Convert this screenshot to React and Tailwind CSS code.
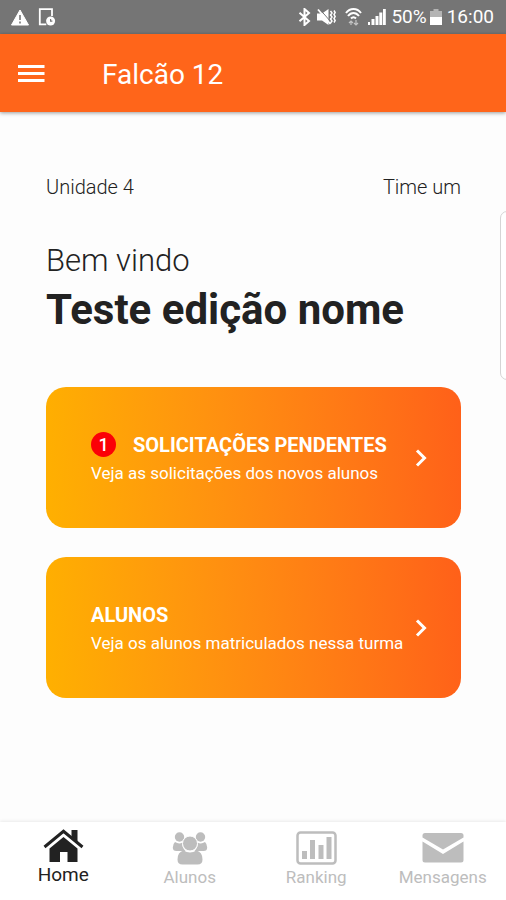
function StatusBar() {
  return (
    <div className="flex h-[34px] shrink-0 items-center justify-between bg-[#757575] pr-3 pl-[11px] text-white">
      <div className="flex items-center gap-[9px]">
        <svg width="18" height="17" viewBox="0 0 18 17" aria-hidden="true">
          <path d="M9 1 17.5 16H.5Z" fill="#fff" strokeLinejoin="round" stroke="#fff" strokeWidth="1" />
          <path d="M9 6v5M9 12.5v2" stroke="#757575" strokeWidth="1.6" />
        </svg>
        <svg width="18" height="18" viewBox="0 0 18 18" fill="none" aria-hidden="true">
          <path d="M14 8V1.2H1.8v15.2h6.5" stroke="#fff" strokeWidth="1.8" />
          <circle cx="12.6" cy="13" r="4.5" fill="#fff" />
          <path d="M12.6 11v2.2h1.8" stroke="#757575" strokeWidth="1.2" />
        </svg>
      </div>
      <div className="flex items-center">
        <svg width="13" height="18" viewBox="0 0 13 18" fill="none" aria-hidden="true">
          <path d="M1.5 4.8 11 13l-4.5 4V1L11 5 1.5 13.2" stroke="#fff" strokeWidth="2" />
        </svg>
        <svg className="ml-[6px]" width="19" height="18" viewBox="0 0 19 18" fill="none" aria-hidden="true">
          <path d="M0 5.5h5L11.5 1v16L5 12.5H0Z" fill="#fff" />
          <path d="M3 1.500 14 14" stroke="#757575" strokeWidth="1" />
          <path d="M1 1.500 13.500 16" stroke="#fff" strokeWidth="1.800" />
          <path d="m13.500 3 1.500 2-1.500 2L15 9l-1.500 2 1.500 2-1.500 2M17 2.500l1.200 2-1.200 2 1.200 2-1.200 2 1.200 2-1.200 2" stroke="#fff" strokeWidth="1.500" />
        </svg>
        <svg className="ml-[9px]" width="17" height="18" viewBox="0 0 17 18" fill="none" aria-hidden="true">
          <path d="M1 5c4-5.200 11-5.200 15 0M3 8c3.200-4 7.800-4 11 0M6 10.500c1.600-1.800 3.400-1.800 5 0" stroke="#fff" strokeWidth="2" />
          <path d="M6 17v-4m-2 2 2-2 2 2M11 12v5m-2-2 2 2 2-2" stroke="#c4c4c4" strokeWidth="1.2" />
        </svg>
        <svg className="ml-[5px]" width="19" height="18" viewBox="0 0 19 18" fill="#fff" aria-hidden="true">
          <path d="M1 14h2v3H1zM4.500 11h3v6h-3zM8.500 8h3v9h-3zM12.300 4.500h3V17h-3zM16 1h2.800v16H16z" />
        </svg>
        <span className="ml-[5px] text-[19px] leading-6">50%</span>
        <svg className="ml-[3px]" width="12" height="18" viewBox="0 0 12 18" aria-hidden="true">
          <path d="M3.500 1h5v2H12v6H0V3h3.500z" fill="#b4b4b4" />
          <path d="M0 9h12v8H0z" fill="#fff" />
        </svg>
        <span className="ml-[5px] text-[19px] leading-6">16:00</span>
      </div>
    </div>
  );
}

function Header({ title }) {
  return (
    <header className="z-10 flex h-[78px] shrink-0 items-center bg-[#ff651a] px-[18px] text-white shadow-[0_1px_4px_rgba(0,0,0,0.4)]">
      <button type="button" aria-label="Menu" className="mr-[57px]">
        <svg width="27" height="20" viewBox="0 0 27 20" fill="none" stroke="#fff" strokeWidth="3">
          <path d="M0 3.500h26.500M0 10.500h26.500M0 17.500h26.500" />
        </svg>
      </button>
      <h1 className="pt-1 text-[28px] leading-8">{title}</h1>
    </header>
  );
}

function ActionCard({ title, description, count }) {
  return (
    <button
      type="button"
      className="flex h-[141px] w-full items-center justify-between rounded-[20px] bg-linear-86 from-[#ffb000] to-[#ff6019] pr-[34px] pl-[45px] text-left text-white"
    >
      <span className="block pt-0.5 whitespace-nowrap">
        <span className="flex items-center text-xl leading-7 font-bold">
          {count && (
            <span className="mr-[17px] flex size-[25px] items-center justify-center rounded-full bg-[#fb0007] text-lg font-medium">
              {count}
            </span>
          )}
          {title}
        </span>
        <span className="block text-[17px] leading-7">{description}</span>
      </span>
      <svg
        className="shrink-0"
        width="12"
        height="18"
        viewBox="0 0 12 18"
        fill="none"
        stroke="#fff"
        strokeWidth="3"
        aria-hidden="true"
      >
        <path d="m2 1.500 7.500 7.500L2 16.500" />
      </svg>
    </button>
  );
}

function HomeIcon() {
  return (
    <svg width="41" height="34" viewBox="0 0 41 34" aria-hidden="true">
      <path d="M1.500 18.500 20.500 2.500l19 16" fill="none" stroke="#fff" strokeWidth="6" />
      <path d="M28.500 1h6v12l-6-5z" fill="#222" />
      <path d="M1.500 18 20.500 2.300l19 15.700" fill="none" stroke="#222" strokeWidth="3" />
      <path d="M6.500 19.500 20.500 8l14 11.500V33H24.500V23h-7.500v10H6.500z" fill="#222" />
    </svg>
  );
}

function StudentsIcon() {
  return (
    <svg width="36" height="34" viewBox="0 0 36 34" fill="#bdbdbd" aria-hidden="true">
      <circle cx="7.500" cy="6" r="4.700" />
      <circle cx="28.500" cy="6" r="4.700" />
      <path d="M3 11q4 2.500 7.500.5-.8 5 3 8.500H4.500Q.8 20 .8 16.500.8 13 3 11zM33 11q-4 2.500-7.500.5.8 5-3 8.500h9q3.700 0 3.700-3.500 0-3.500-2.200-5.500z" />
      <circle cx="18" cy="12.500" r="7.500" stroke="#fff" strokeWidth="1" />
      <path d="M11.500 19.500q6.500 4 13 0 6 1.500 6 9 0 5-5 5h-15q-5 0-5-5 0-7.500 6-9z" />
    </svg>
  );
}

function RankingIcon() {
  return (
    <svg width="41" height="34" viewBox="0 0 41 34" aria-hidden="true">
      <rect x="1.500" y="1.500" width="38" height="31" rx="3" fill="none" stroke="#bdbdbd" strokeWidth="2.500" />
      <path d="M6 20h5v8H6zM14 9h5v19h-5zM22.500 14h5v14h-5zM30.500 6h5v22h-5z" fill="#bdbdbd" />
    </svg>
  );
}

function MailIcon() {
  return (
    <svg width="42" height="30" viewBox="0 0 42 30" fill="#bdbdbd" aria-hidden="true">
      <path d="M3 0h36q2.500 0 2.500 2.500V4.500L21 16.500.5 4.500V2.500Q.5 0 3 0z" />
      <path d="M.5 8.500 21 21 41.500 8.500V27q0 2.500-2.500 2.500H3Q.5 29.500.5 27z" />
    </svg>
  );
}

const tabs = [
  { label: "Home", Icon: HomeIcon, active: true },
  { label: "Alunos", Icon: StudentsIcon },
  { label: "Ranking", Icon: RankingIcon },
  { label: "Mensagens", Icon: MailIcon },
];

function TabBar() {
  return (
    <nav className="grid h-[78px] shrink-0 grid-cols-4 bg-white shadow-[0_-1px_3px_rgba(0,0,0,0.08)]">
      {tabs.map(({ label, Icon, active }) => (
        <a
          key={label}
          href="#"
          aria-current={active ? "page" : undefined}
          className={
            active
              ? "flex flex-col items-center pt-[7px] text-[19px] leading-6 text-[#222]"
              : "flex flex-col items-center pt-[9px] text-[17px] leading-6 text-[#bdbdbd]"
          }
        >
          <span className="flex h-[34px] items-center">
            <Icon />
          </span>
          {label}
        </a>
      ))}
    </nav>
  );
}

export default function App() {
  return (
    <div className="relative flex min-h-screen flex-col overflow-hidden bg-[#fdfdfd] font-['Roboto',sans-serif] text-[#222]">
      <StatusBar />
      <Header title="Falcão 12" />

      <main className="flex-1 pt-[61px] pr-[45px] pl-[46px]">
        <div className="flex justify-between text-xl leading-7 font-light">
          <span>Unidade 4</span>
          <span>Time um</span>
        </div>

        <p className="mt-10 text-[31px] leading-10 font-light">Bem vindo</p>
        <h2 className="text-[42px] leading-[58px] font-bold">Teste edição nome</h2>

        <div className="mt-12 flex flex-col gap-[29px]">
          <ActionCard
            count={1}
            title="SOLICITAÇÕES PENDENTES"
            description="Veja as solicitações dos novos alunos"
          />
          <ActionCard
            title="ALUNOS"
            description="Veja os alunos matriculados nessa turma"
          />
        </div>
      </main>

      {/* edge panel handle */}
      <div className="absolute top-[211px] -right-2 h-[169px] w-[14px] rounded-lg border border-[#d5d5d5] bg-white" />

      <TabBar />
    </div>
  );
}
